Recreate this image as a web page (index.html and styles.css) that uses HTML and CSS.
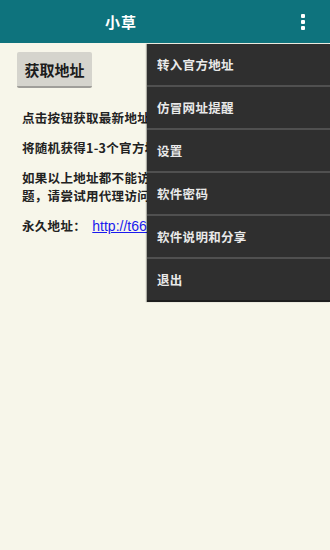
FILE: index.html
```html
<!DOCTYPE html>
<html lang="zh">
<head>
<meta charset="utf-8">
<link rel="stylesheet" href="styles.css">
</head>
<body>
<div class="app">
  <header class="bar">
    <div class="title">小草</div>
    <div class="more"><span></span><span></span><span></span></div>
  </header>
  <main class="content">
    <button class="btn">获取地址</button>
    <p class="line">点击按钮获取最新地址</p>
    <p class="line">将随机获得1-3个官方地址</p>
    <p class="line">如果以上地址都不能访问，可能是网络问<br>题，请尝试用代理访问</p>
    <p class="line">永久地址：&nbsp;&nbsp;<a class="link" href="#">http://t66y.com</a></p>
  </main>
  <ul class="menu">
    <li class="item">转入官方地址</li>
    <li class="item">仿冒网址提醒</li>
    <li class="item">设置</li>
    <li class="item">软件密码</li>
    <li class="item">软件说明和分享</li>
    <li class="item">退出</li>
  </ul>
</div>
</body>
</html>
```
FILE: styles.css
```css
html, body {
  margin: 0;
  padding: 0;
}
body {
  width: 330px;
  height: 550px;
  overflow: hidden;
  background: #f7f6ea;
  font-family: "Noto Sans CJK SC", "Noto Sans", sans-serif;
}
.app {
  position: relative;
  width: 330px;
  height: 550px;
}
.bar {
  height: 43px;
  background: #0e737d;
  display: flex;
  align-items: center;
  position: relative;
}
.title {
  margin-left: 105px;
  color: #ffffff;
  font-size: 15px;
  font-weight: bold;
  letter-spacing: 1px;
}
.more {
  margin-left: auto;
  margin-right: 25px;
  display: flex;
  flex-direction: column;
  gap: 2px;
  margin-top: 1px;
}
.more span {
  width: 4px;
  height: 4px;
  background: #ffffff;
  border-radius: 1px;
}
.content {
  padding: 9px 0 0 17px;
}
.btn {
  display: block;
  width: 75px;
  height: 36px;
  background: #d5d4cd;
  border: none;
  border-bottom: 2px solid #9f9e99;
  border-radius: 2px;
  font-family: "Noto Sans CJK SC", sans-serif;
  font-size: 15px;
  font-weight: bold;
  color: #1c1c1c;
  padding: 0;
  margin: 0 0 21px 0;
}
.line {
  margin: 0 0 12px 5px;
  font-size: 12.5px;
  font-weight: bold;
  line-height: 18px;
  letter-spacing: 0.3px;
  color: #222222;
  white-space: nowrap;
}
.link {
  color: #1a1aee;
  text-decoration: underline;
  font-family: "Liberation Sans", sans-serif;
  font-weight: normal;
  font-size: 14px;
  letter-spacing: 0;
}
.menu {
  position: absolute;
  top: 44px;
  left: 147px;
  width: 183px;
  margin: 0;
  padding: 0;
  list-style: none;
  background: #2f2f2f;
  border-bottom: 2px solid #1e1e1e;
  box-shadow: -1px 0 1px rgba(0,0,0,0.3);
}
.item {
  height: 41px;
  border-bottom: 2px solid #505050;
  display: flex;
  align-items: center;
  padding-left: 10px;
  color: #e9e9e9;
  font-size: 12.5px;
  font-weight: bold;
  letter-spacing: 0.3px;
}
.item:last-child {
  border-bottom: none;
}
```
